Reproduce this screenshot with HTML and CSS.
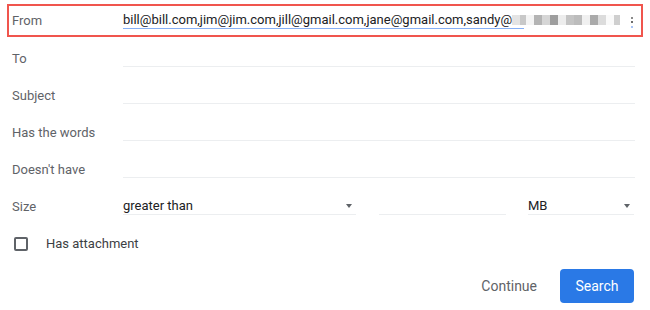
FILE: index.html
```html
<!DOCTYPE html>
<html>
<head>
<meta charset="utf-8">
<link rel="stylesheet" href="styles.css">
</head>
<body>
<div class="page">
  <div class="row row-from">
    <div class="label label-from">From</div>
    <div class="field field-from">
      <span class="value">bill@bill.com,jim@jim.com,jill@gmail.com,jane@gmail.com,sandy@</span>
      <span class="blur">
        <i class="b1"></i><i class="b2"></i><i class="b3"></i><i class="b4"></i><i class="b5"></i><i class="b6"></i><i class="b7"></i><i class="b8"></i><i class="b9"></i><i class="b10"></i><i class="b11"></i><i class="b12"></i><i class="b13"></i><i class="b14"></i>
      </span>
      <span class="tail"></span>
    </div>
  </div>
  <div class="row">
    <div class="label">To</div>
    <div class="field"></div>
  </div>
  <div class="row">
    <div class="label">Subject</div>
    <div class="field"></div>
  </div>
  <div class="row">
    <div class="label">Has the words</div>
    <div class="field"></div>
  </div>
  <div class="row">
    <div class="label">Doesn't have</div>
    <div class="field"></div>
  </div>
  <div class="row">
    <div class="label">Size</div>
    <div class="select select-cmp"><span class="value">greater than</span><span class="arrow"></span></div>
    <div class="field field-num"></div>
    <div class="select select-unit"><span class="value">MB</span><span class="arrow"></span></div>
  </div>
  <div class="row row-check">
    <span class="checkbox"></span>
    <span class="check-label">Has attachment</span>
  </div>
  <div class="actions">
    <span class="btn-text">Continue</span>
    <span class="btn-primary">Search</span>
  </div>
</div>
</body>
</html>
```
FILE: styles.css
```css
* { box-sizing: border-box; }
html, body { margin: 0; padding: 0; background: #fff; }
body {
  font-family: Roboto, "Liberation Sans", Arial, sans-serif;
  font-size: 13px;
  color: #202124;
  width: 650px;
  height: 310px;
  overflow: hidden;
}
.page { padding-top: 4px; }
.row {
  display: flex;
  align-items: center;
  height: 37px;
  padding-left: 12px;
}
.row-from {
  height: 33px;
  margin: 0 7px 3px 7px;
  padding-left: 3px;
  border: 2px solid #f0554d;
}
.label {
  width: 111px;
  color: #5f6368;
  flex: none;
}
.field {
  width: 512px;
  height: 17px;
  line-height: 16px;
  border-bottom: 1px solid #eceef0;
  display: flex;
  align-items: center;
}
.field-from {
  border-bottom: none;
  position: relative;
  width: 512px;
}
.field-from .value {
  display: block;
  height: 17px;
  line-height: 16px;
  border-bottom: 1px solid #86aff5;
  padding-right: 12px;
  white-space: nowrap;
  color: #202124;
}
.blur {
  display: flex;
  height: 10px;
  margin-left: -12px;
  margin-top: -2px;
}
.blur i { display: block; width: 8px; height: 10px; }
.b1 { background: #e4e4e4; }
.b2 { background: #c8c8c8; width: 6px !important; }
.b3 { background: #f4f4f4; }
.b4 { background: #b4b4b4; }
.b5 { background: #d6d6d6; }
.b6 { background: #9e9e9e; }
.b7 { background: #ededed; }
.b8 { background: #c4c4c4; }
.b9 { background: #bcbcbc; }
.b10 { background: #f0f0f0; }
.b11 { background: #aaaaaa; }
.b12 { background: #dcdcdc; }
.b13 { background: #fafafa; }
.b14 { background: #cfcfcf; width: 6px !important; }
.tail {
  position: absolute;
  right: 2px;
  top: 3px;
  width: 2px;
  height: 14px;
  background: linear-gradient(#fff 0, #fff 2px, #8a8a8a 2px, #8a8a8a 4px, #fff 4px, #fff 6px, #6c6c6c 6px, #6c6c6c 8px, #fff 8px, #fff 11px, #a7c3f6 11px, #a7c3f6 13px, #fff 13px);
}
.select {
  display: flex;
  align-items: center;
  justify-content: space-between;
  height: 17px;
  line-height: 16px;
  border-bottom: 1px solid #eceef0;
  padding-right: 4px;
}
.select-cmp { width: 233px; }
.field-num { width: 127px; margin-left: 23px; }
.select-unit { width: 106px; margin-left: 22px; }
.arrow {
  width: 0;
  height: 0;
  border-left: 3.5px solid transparent;
  border-right: 3.5px solid transparent;
  border-top: 4px solid #5f6368;
  margin-top: -1px;
}
.row-check { padding-left: 14px; }
.checkbox {
  width: 14px;
  height: 14px;
  border: 2px solid #5f6368;
  border-radius: 2px;
  flex: none;
}
.check-label {
  margin-left: 18px;
  color: #3c4043;
}
.actions {
  display: flex;
  justify-content: flex-end;
  align-items: center;
  margin-top: 7px;
  padding-right: 16px;
}
.btn-text {
  color: #5f6368;
  font-size: 14px;
  margin-right: 23px;
}
.btn-primary {
  display: flex;
  align-items: center;
  justify-content: center;
  width: 74px;
  height: 34px;
  background: #2a79e6;
  color: #fff;
  font-size: 14px;
  border-radius: 4px;
}
```
